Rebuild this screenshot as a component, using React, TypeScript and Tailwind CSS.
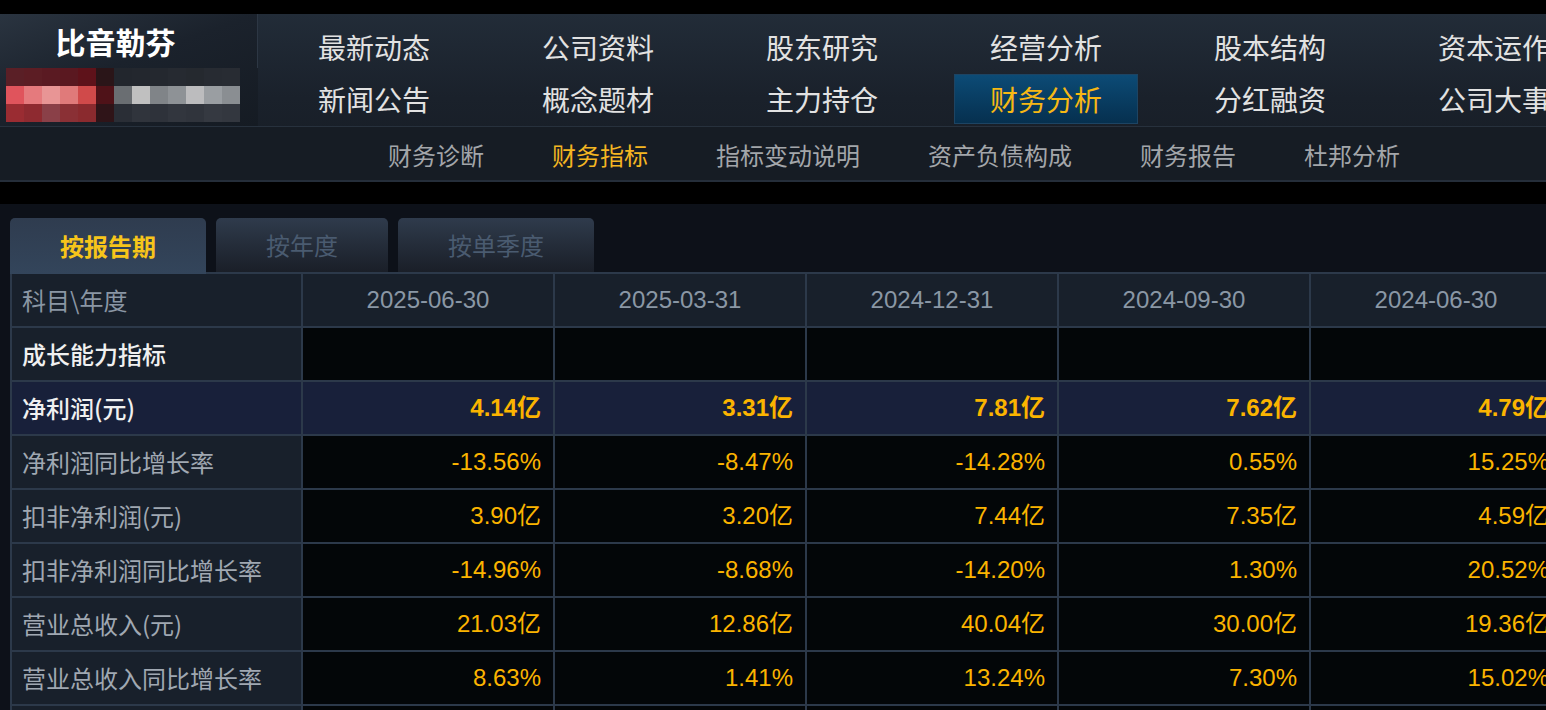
import React from 'react';

const cjk = "font-['Noto_Sans_CJK_SC',sans-serif]";
const num = "font-['Liberation_Sans','Noto_Sans_CJK_SC',sans-serif]";

const topNav = [
  ['最新动态', '公司资料', '股东研究', '经营分析', '股本结构', '资本运作'],
  ['新闻公告', '概念题材', '主力持仓', '财务分析', '分红融资', '公司大事'],
];

const subNav = ['财务诊断', '财务指标', '指标变动说明', '资产负债构成', '财务报告', '杜邦分析'];

const dates = ['2025-06-30', '2025-03-31', '2024-12-31', '2024-09-30', '2024-06-30'];

type Row = { label: string; values: string[]; kind?: 'section' | 'highlight' };

const rows: Row[] = [
  { label: '成长能力指标', values: ['', '', '', '', ''], kind: 'section' },
  { label: '净利润(元)', values: ['4.14亿', '3.31亿', '7.81亿', '7.62亿', '4.79亿'], kind: 'highlight' },
  { label: '净利润同比增长率', values: ['-13.56%', '-8.47%', '-14.28%', '0.55%', '15.25%'] },
  { label: '扣非净利润(元)', values: ['3.90亿', '3.20亿', '7.44亿', '7.35亿', '4.59亿'] },
  { label: '扣非净利润同比增长率', values: ['-14.96%', '-8.68%', '-14.20%', '1.30%', '20.52%'] },
  { label: '营业总收入(元)', values: ['21.03亿', '12.86亿', '40.04亿', '30.00亿', '19.36亿'] },
  { label: '营业总收入同比增长率', values: ['8.63%', '1.41%', '13.24%', '7.30%', '15.02%'] },
  { label: '营业总收入滚动环比增长', values: ['2.14%', '-0.85%', '2.93%', '1.77%', '3.08%'] },
];

// blurred logo mosaic
const mosaic = [
  ['#5a1f26', '#5c1d24', '#5a1a22', '#5a1820', '#5e121a', '#2a1518', '#22262d', '#23272e', '#24282f', '#262a31', '#25292f', '#272b32', '#282c33'],
  ['#e0545c', '#e57a7d', '#e89595', '#e07a7a', '#d04a4a', '#4f1218', '#6a6e72', '#c0c0c0', '#808488', '#8e9296', '#bcbcbe', '#9a9ea2', '#8a8e92'],
  ['#9a2c32', '#8e2a30', '#8a4048', '#8a3035', '#8a2a2e', '#2f1418', '#2a2e36', '#30343c', '#2e323a', '#32363e', '#30343c', '#353941', '#33373f'],
];

export default function App() {
  return (
    <div className={`w-full h-[710px] overflow-hidden bg-black ${cjk}`}>
      <div className="w-[1620px]">
        <div className="h-[14px] bg-black" />

        {/* Header */}
        <div className="bg-gradient-to-b from-[#222c38] via-[#1a212b] to-[#161c24]">
          <div className="flex h-[112px]">
            <div className="w-[258px] shrink-0 flex flex-col bg-[linear-gradient(160deg,#2a3440_0%,#1b222c_45%,#151b23_100%)]">
              <div className="h-[54px] flex items-center justify-center pr-[26px] border-r border-[#2d3744]">
                <span className="text-[30px] font-bold text-white leading-none">比音勒芬</span>
              </div>
              <div className="h-[54px] pl-[6px] flex flex-col">
                {mosaic.map((line, i) => (
                  <div key={i} className="flex">
                    {line.map((c, j) => (
                      <div key={j} className="w-[18px] h-[18px]" style={{ backgroundColor: c }} />
                    ))}
                  </div>
                ))}
              </div>
            </div>
            <div className="shrink-0 pl-[4px] pt-[6px] flex flex-col">
              {topNav.map((line, r) => (
                <div key={r} className={`grid grid-cols-[repeat(6,224px)] ${r === 0 ? 'h-[54px] items-center' : 'h-[52px] items-start'}`}>
                  {line.map((t) => {
                    const active = t === '财务分析';
                    return (
                      <div key={t} className="flex justify-center">
                        <div
                          className={`w-[184px] h-[50px] flex items-center justify-center text-[28px] leading-none ${
                            active
                              ? 'bg-gradient-to-b from-[#0c4b76] to-[#06304f] border border-[#1d4463] text-[#f7b814]'
                              : 'text-[#e2e2e2]'
                          }`}
                        >
                          {t}
                        </div>
                      </div>
                    );
                  })}
                </div>
              ))}
            </div>
          </div>

          {/* Sub navigation */}
          <div className="h-[56px] pt-[3px] border-t border-[#27313d] border-b-2 border-b-[#252e3a] bg-[#161c24] flex items-center pl-[388px] gap-[68px]">
            {subNav.map((t) => (
              <span
                key={t}
                className={`text-[24px] leading-none ${t === '财务指标' ? 'text-[#f4b622]' : 'text-[#a3a6aa]'}`}
              >
                {t}
              </span>
            ))}
          </div>
        </div>

        <div className="h-[22px] bg-black" />

        {/* Content */}
        <div className="bg-[#0d1119] pt-[14px] pl-[10px] h-[520px]">
          <div className="flex gap-[10px] h-[54px] items-end">
            <div className="relative z-10 w-[196px] h-[56px] -mb-[2px] rounded-t-[5px] bg-gradient-to-b from-[#2f3c4f] to-[#33455b] flex items-center justify-center text-[24px] font-bold text-[#f7c51a]">
              按报告期
            </div>
            <div className="w-[172px] h-[54px] rounded-t-[5px] bg-gradient-to-b from-[#2f3b4c] to-[#1a1f28] flex items-center justify-center text-[24px] text-[#4a5b70]">
              按年度
            </div>
            <div className="w-[196px] h-[54px] rounded-t-[5px] bg-gradient-to-b from-[#2f3b4c] to-[#1a1f28] flex items-center justify-center text-[24px] text-[#4a5b70]">
              按单季度
            </div>
          </div>

          <div className="grid grid-cols-[289px_repeat(5,250px)] auto-rows-[52px] gap-[2px] p-[2px] bg-[#2c394a] w-max">
            <div className="bg-[#18202b] flex items-center pl-[10px] text-[24px] text-[#8a96a4]">科目\年度</div>
            {dates.map((d) => (
              <div key={d} className={`bg-[#18202b] flex items-center justify-center text-[24px] text-[#8a97a5] ${num}`}>
                {d}
              </div>
            ))}
            {rows.map((row) => {
              const hl = row.kind === 'highlight';
              const bright = row.kind === 'section' || hl;
              return (
                <React.Fragment key={row.label}>
                  <div
                    className={`${hl ? 'bg-[#18203a]' : 'bg-[#18202b]'} flex items-center pl-[10px] text-[24px] ${
                      bright ? 'text-[#f0f0f0] font-medium' : 'text-[#a0a8b2]'
                    }`}
                  >
                    {row.label}
                  </div>
                  {row.values.map((v, i) => (
                    <div
                      key={i}
                      className={`${hl ? 'bg-[#18203a] font-bold' : 'bg-[#030608]'} flex items-center justify-end pr-[12px] text-[24px] text-[#fbb400] ${num}`}
                    >
                      {v}
                    </div>
                  ))}
                </React.Fragment>
              );
            })}
          </div>
        </div>
      </div>
    </div>
  );
}
